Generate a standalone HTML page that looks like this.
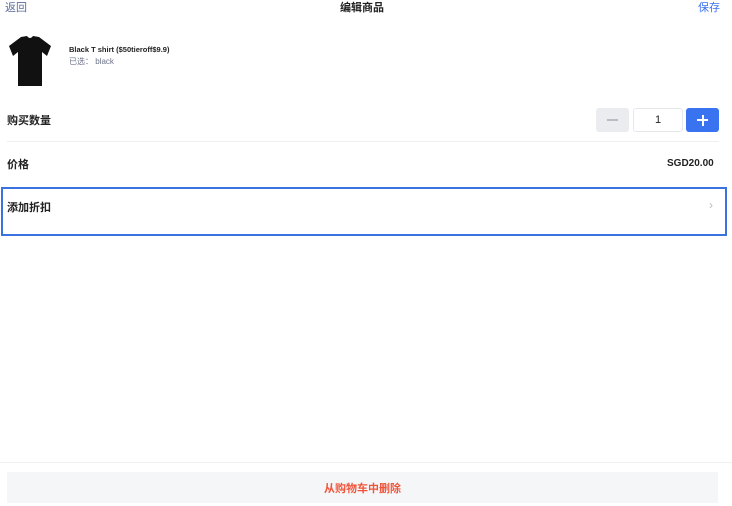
<!DOCTYPE html><html><head><meta charset="utf-8"><style>
body{margin:0;width:732px;height:503px;background:#fff;font-family:"Liberation Sans","Noto Sans CJK SC",sans-serif;position:relative;overflow:hidden;color:#222}
.a{position:absolute}
</style></head><body>
<div class="a" style="left:5px;top:-1px;font-size:11px;color:#5a6c9c">返回</div>
<div class="a" style="left:340px;top:-1px;font-size:11px;color:#222;font-weight:bold">编辑商品</div>
<div class="a" style="left:698px;top:-1px;font-size:11px;color:#3a73f0">保存</div>
<svg class="a" style="left:8px;top:34px" width="44" height="54" viewBox="0 0 44 54"><path d="M13 3 L19 2 Q22 6 25 2 L31 3 L43 12 L39 22 L34 18 L34 52 L10 52 L10 18 L5 22 L1 12 Z" fill="#111"/></svg>
<div class="a" style="left:69px;top:45px;font-size:7.5px;color:#222;font-weight:bold">Black T shirt ($50tieroff$9.9)</div>
<div class="a" style="left:69px;top:56px;font-size:8px;color:#6b7388">已选： black</div>
<div class="a" style="left:7px;top:112px;font-size:11px;color:#222;font-weight:bold">购买数量</div>
<div class="a" style="left:596px;top:108px;width:33px;height:24px;background:#ebecf0;border-radius:3px"><div class="a" style="left:11px;top:11px;width:11px;height:1.5px;background:#b8bcc6"></div></div>
<div class="a" style="left:633px;top:108px;width:48px;height:22px;border:1px solid #e6e8ec;border-radius:3px;text-align:center;font-size:11px;line-height:22px">1</div>
<div class="a" style="left:686px;top:108px;width:33px;height:24px;background:#3a73f0;border-radius:3px"><div class="a" style="left:11px;top:11px;width:11px;height:2px;background:#fff"></div><div class="a" style="left:15.5px;top:6.5px;width:2px;height:11px;background:#fff"></div></div>
<div class="a" style="left:7px;top:141px;width:712px;height:1px;background:#eeeff2"></div>
<div class="a" style="left:7px;top:156px;font-size:11px;color:#222;font-weight:bold">价格</div>
<div class="a" style="left:667px;top:158px;font-size:10px;color:#222;font-weight:bold">SGD20.00</div>
<div class="a" style="left:1px;top:187px;width:722px;height:45px;border:2px solid #3a73e0"></div>
<div class="a" style="left:7px;top:199px;font-size:11px;color:#222;font-weight:bold">添加折扣</div>
<div class="a" style="left:709px;top:198px;font-size:12px;color:#bbb">›</div>
<div class="a" style="left:0;top:462px;width:732px;height:1px;background:#f0f1f3"></div>
<div class="a" style="left:7px;top:472px;width:711px;height:31px;background:#f5f6f8;text-align:center;font-size:11px;color:#f0553a;line-height:34px;font-weight:bold">从购物车中删除</div>
</body></html>
